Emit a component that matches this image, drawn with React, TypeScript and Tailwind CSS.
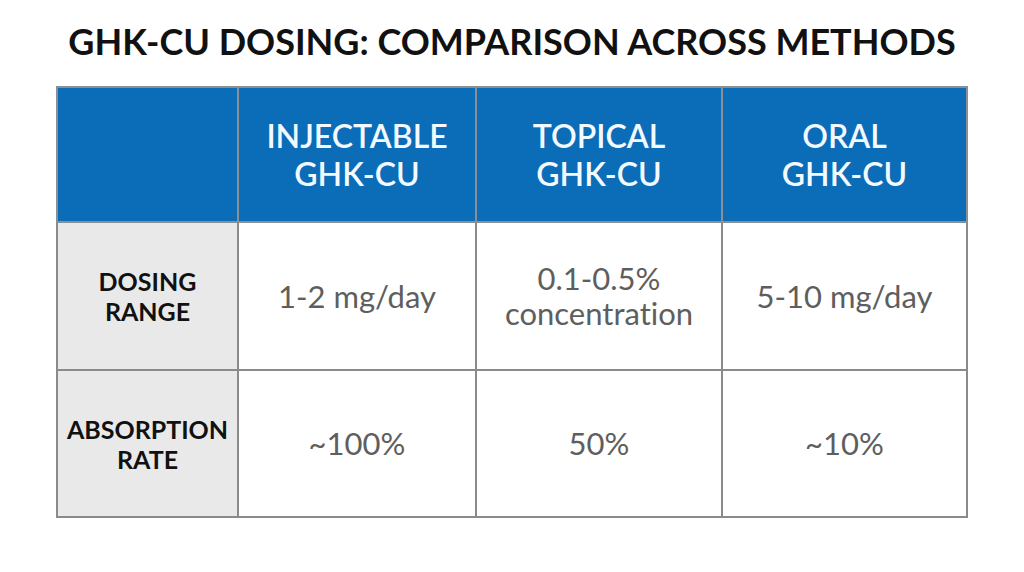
const headers = [
  ['INJECTABLE', 'GHK-CU'],
  ['TOPICAL', 'GHK-CU'],
  ['ORAL', 'GHK-CU']
];

const rows: { label: string[]; values: string[][] }[] = [
  {
    label: ['DOSING', 'RANGE'],
    values: [['1-2 mg/day'], ['0.1-0.5%', 'concentration'], ['5-10 mg/day']]
  },
  {
    label: ['ABSORPTION', 'RATE'],
    values: [['~100%'], ['50%'], ['~10%']]
  }
];

export default function App() {
  return (
    <div className="w-[1024px] h-[572px] bg-white flex flex-col items-center font-['Lato','Liberation_Sans',sans-serif] [font-variant-ligatures:none]">
      <h1 className="mt-[20px] text-[36px] leading-[43px] font-bold text-[#111]">
        GHK-CU DOSING: COMPARISON ACROSS METHODS
      </h1>

      <table className="mt-[23px] border-collapse table-fixed w-[910px]">
        <colgroup>
          <col className="w-[181px]" />
          <col className="w-[238px]" />
          <col className="w-[246px]" />
          <col className="w-[245px]" />
        </colgroup>
        <thead>
          <tr className="h-[135px] bg-[#0b6cb8]">
            <th className="border-2 border-[#8a8f96]" />
            {headers.map(h => (
              <th
                key={h[0]}
                className="border-2 border-[#8a8f96] text-[32px] leading-[38px] font-semibold text-[#f2f9ff] text-center align-middle"
              >
                {h.map(line => (
                  <div key={line}>{line}</div>
                ))}
              </th>
            ))}
          </tr>
        </thead>
        <tbody>
          {rows.map((row, i) => (
            <tr key={row.label[0]} className={i === 0 ? 'h-[148px]' : 'h-[147px]'}>
              <td className="border-2 border-[#8a8a8a] bg-[#e9e9e9] text-center align-middle text-[25px] leading-[30px] font-bold text-[#111]">
                {row.label.map(line => (
                  <div key={line}>{line}</div>
                ))}
              </td>
              {row.values.map(v => (
                <td
                  key={v[0]}
                  className="border-2 border-[#8a8a8a] bg-white text-center align-middle text-[31px] leading-[35px] text-[#5e5e5e]"
                >
                  {v.map(line => (
                    <div key={line}>{line}</div>
                  ))}
                </td>
              ))}
            </tr>
          ))}
        </tbody>
      </table>
    </div>
  );
}
